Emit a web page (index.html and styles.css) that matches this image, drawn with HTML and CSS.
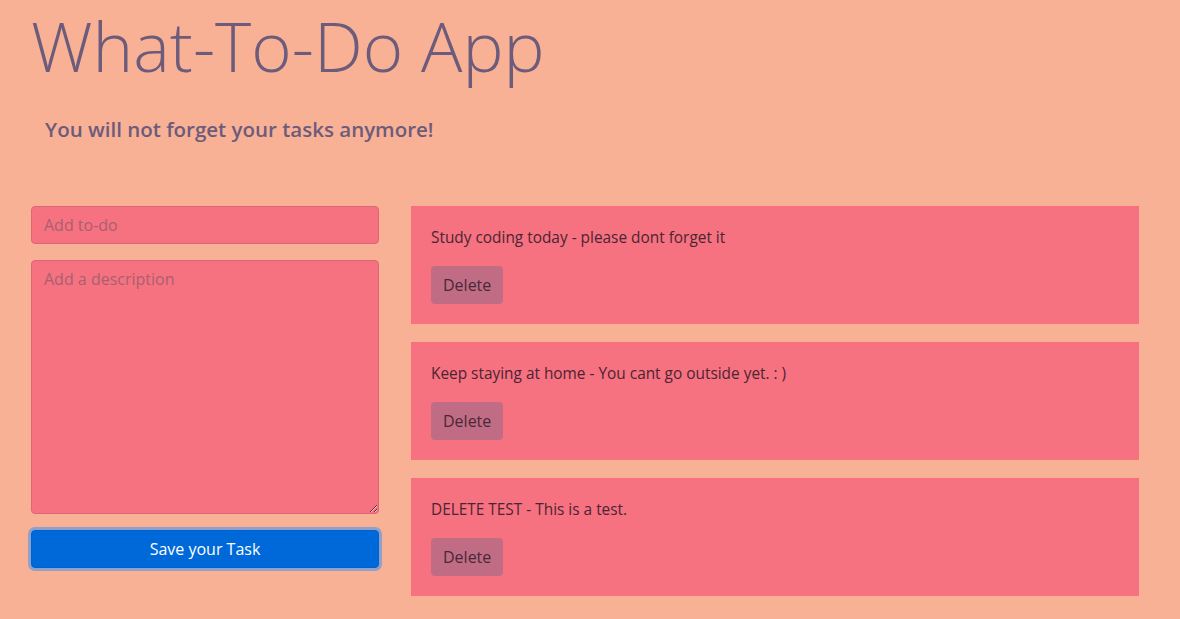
FILE: index.html
```html
<!DOCTYPE html>
<html lang="en">
<head>
<meta charset="utf-8">
<title>What-To-Do App</title>
<link rel="stylesheet" href="styles.css">
</head>
<body>
<div class="page">
  <header class="header">
    <h1 class="title">What-To-Do App</h1>
    <h5 class="subtitle">You will not forget your tasks anymore!</h5>
  </header>
  <main class="main">
    <form class="form">
      <input class="field" type="text" placeholder="Add to-do">
      <textarea class="field area" placeholder="Add a description"></textarea>
      <button class="save" type="button">Save your Task</button>
    </form>
    <section class="tasks">
      <div class="task">
        <p class="task-text">Study coding today - please dont forget it</p>
        <button class="delete" type="button">Delete</button>
      </div>
      <div class="task">
        <p class="task-text">Keep staying at home - You cant go outside yet. : )</p>
        <button class="delete" type="button">Delete</button>
      </div>
      <div class="task">
        <p class="task-text">DELETE TEST - This is a test.</p>
        <button class="delete" type="button">Delete</button>
      </div>
    </section>
  </main>
</div>
</body>
</html>
```

FILE: styles.css
```css
* { box-sizing: border-box; }
html, body { margin: 0; padding: 0; }
body {
  background: #F8B195;
  font-family: "Open Sans", "Noto Sans", sans-serif;
  font-size: 16px;
  line-height: 1.5;
  color: #212529;
  width: 1180px;
  height: 619px;
  overflow: hidden;
}
.page { padding: 0 31px; }
.header { display: flex; flex-direction: column; align-items: flex-start; }
.title {
  margin: 0;
  padding: 0 4px 0 0;
  font-weight: 300;
  font-size: 69px;
  line-height: 1.32;
  color: #6C5B7B;
  white-space: nowrap;
}
.subtitle {
  margin: 26px 0 0 14px;
  font-size: 20.5px;
  font-weight: 600;
  line-height: 1.2;
  color: #6C5B7B;
}
.main {
  display: flex;
  gap: 32px;
  margin-top: 64px;
  align-items: flex-start;
}
.form {
  width: 348px;
  display: flex;
  flex-direction: column;
  margin: 0;
}
.field {
  display: block;
  width: 100%;
  height: 38px;
  padding: 6px 12px;
  font-family: inherit;
  font-size: 16px;
  line-height: 1.5;
  color: #495057;
  background: #F67280;
  border: 1px solid #d9677a;
  border-radius: 4px;
  margin: 0 0 16px;
  outline: none;
}
.field::placeholder { color: #a8606f; opacity: 1; }
.area { height: 254px; resize: vertical; margin-bottom: 16px; }
.save {
  height: 38px;
  width: 100%;
  font-family: inherit;
  font-size: 16px;
  color: #fff;
  background: #0069d9;
  border: 1px solid #0062cc;
  border-radius: 4px;
  box-shadow: 0 0 0 3px rgba(38,143,255,.5);
  cursor: pointer;
}
.tasks {
  width: 728px;
  display: flex;
  flex-direction: column;
  gap: 18px;
}
.task {
  background: #F67280;
  padding: 20px;
}
.task-text {
  margin: 0 0 16px;
  color: #4b2433;
  font-size: 15.4px;
  line-height: 24px;
}
.delete {
  display: block;
  height: 38px;
  padding: 6px 12px;
  font-family: inherit;
  font-size: 16px;
  color: #4a2838;
  background: #C06C84;
  border: none;
  border-radius: 4px;
  cursor: pointer;
}
```
